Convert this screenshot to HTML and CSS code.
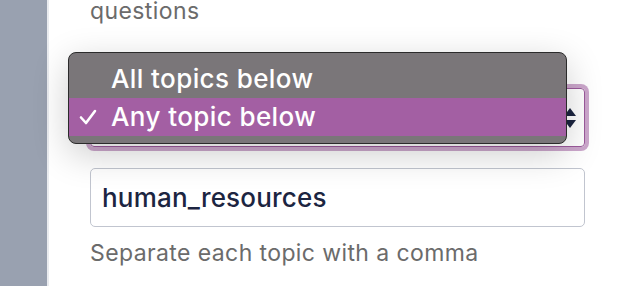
FILE: index.html
```html
<html>
  <head>
    <title>Topic filter</title>
    <link rel="stylesheet" href="styles.css">
  </head>
  <body>
    <div id="page">
      <div id="sidebar"></div>
      <div id="main">
        <p class="hint top">questions</p>

        <div class="field">
          <div class="select focused">
            <span class="select-value"></span>
            <svg class="arrows" width="14" height="24" viewBox="0 0 14 24">
              <path d="M7 2 L13 10 L1 10 Z" fill="#1c2541"/>
              <path d="M7 22 L13 14 L1 14 Z" fill="#1c2541"/>
            </svg>
          </div>
          <div class="menu">
            <div class="option">All topics below</div>
            <div class="option selected">
              <svg class="check" width="18" height="16" viewBox="0 0 18 16">
                <path d="M2 8.5 L7 14 L16 2" fill="none" stroke="#fff" stroke-width="2.6" stroke-linecap="round" stroke-linejoin="round"/>
              </svg>
              Any topic below
            </div>
          </div>
        </div>

        <input class="text" type="text" value="human_resources">
        <p class="hint help">Separate each topic with a comma</p>
      </div>
    </div>
  </body>
</html>
```
FILE: styles.css
```css
body {
    margin: 0;
    background: #fff;
    font-family: Inter, "Noto Sans", sans-serif;
}
#page {
    display: flex;
    height: 286px;
    overflow: hidden;
}
#sidebar {
    width: 47px;
    background: #99a1b0;
    border-right: 2px solid #e9ebef;
}
#main {
    flex: 1;
    padding-left: 41px;
}
.hint {
    color: #6b6b6b;
    font-size: 23px;
    letter-spacing: 0.4px;
    margin: 0;
}
.top {
    margin-top: -7px;
    line-height: 36px;
}
.field {
    position: relative;
    width: 495px;
    margin-top: 59px;
}
.select {
    box-sizing: border-box;
    height: 59px;
    border: 1px solid #9c5a9c;
    border-radius: 4px;
    box-shadow: 0 0 0 4px rgba(163, 95, 163, 0.55);
    display: flex;
    align-items: center;
    padding: 0 7px 0 12px;
    font-size: 26px;
    color: #1c2541;
}
.select-value {
    flex: 1;
}
.menu {
    position: absolute;
    left: -22px;
    top: -36px;
    width: 497px;
    padding: 7px 0;
    background: #7a7679;
    border: 1px solid #2b2b2b;
    border-radius: 8px;
    box-shadow: 0 10px 36px rgba(0, 0, 0, 0.2);
    font-size: 26px;
    font-weight: 500;
    letter-spacing: 0.4px;
    color: #fff;
}
.option {
    height: 38px;
    line-height: 38px;
    padding-left: 42px;
    position: relative;
}
.selected {
    background: #a35fa3;
}
.check {
    position: absolute;
    left: 10px;
    top: 11px;
}
.text {
    display: block;
    box-sizing: border-box;
    width: 495px;
    height: 59px;
    margin-top: 21px;
    border: 1px solid #c1c5cf;
    border-radius: 5px;
    padding: 0 11px;
    font-family: Inter, "Noto Sans", sans-serif;
    font-size: 26px;
    font-weight: 500;
    letter-spacing: 0.2px;
    color: #1c2541;
}
.help {
    margin-top: 12px;
}
```
